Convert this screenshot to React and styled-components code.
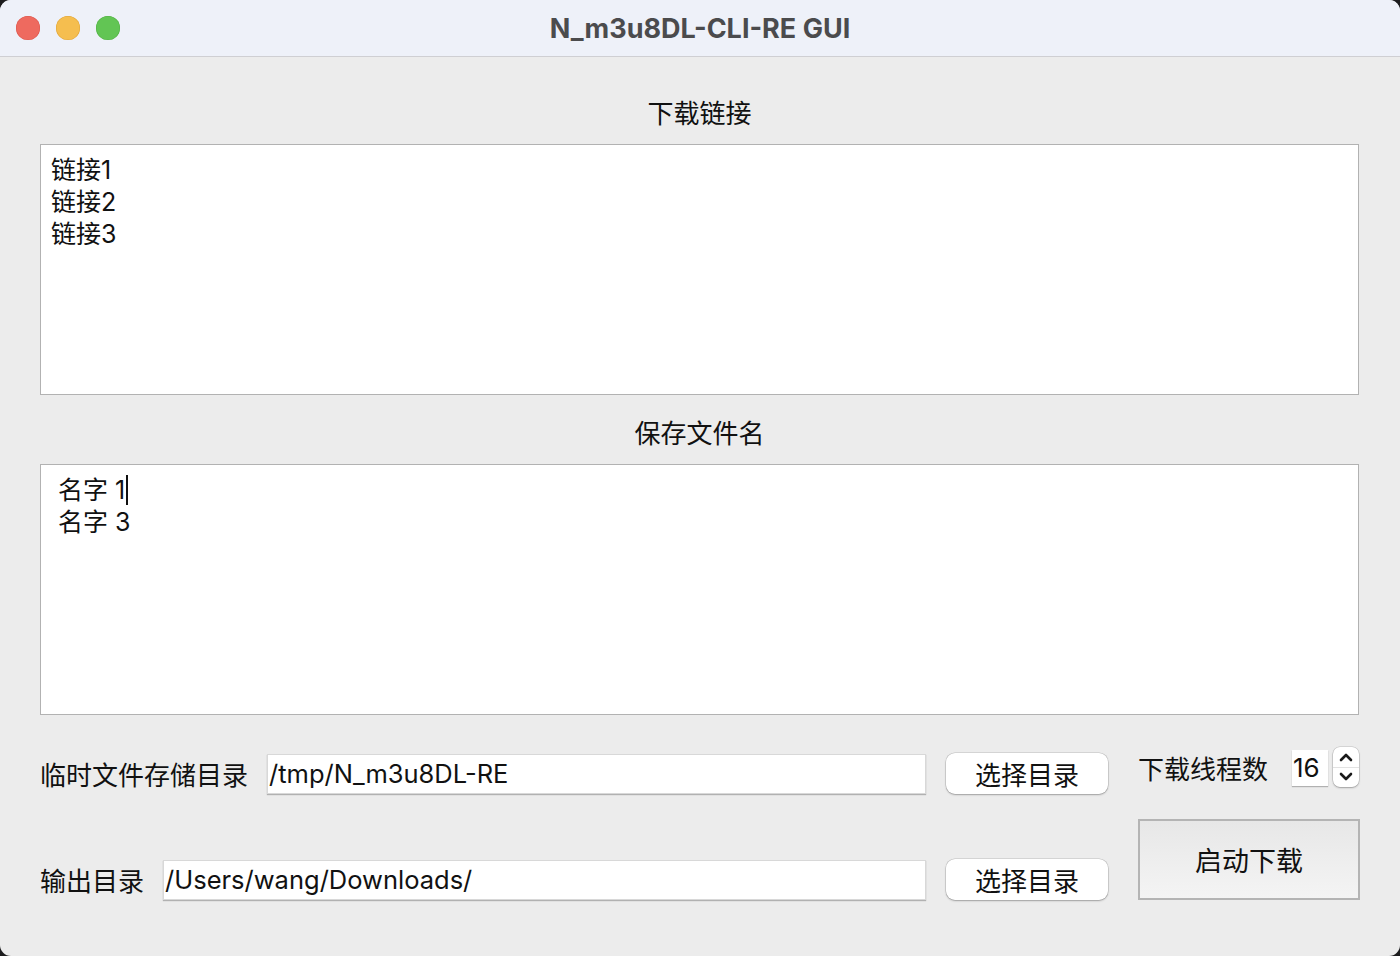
import React from "react";
import styled, { createGlobalStyle } from "styled-components";

const GlobalStyle = createGlobalStyle`
  html, body {
    margin: 0;
    padding: 0;
    background: #1c1c1e;
  }
  body {
    font-family: Inter, "Noto Sans CJK SC", "Noto Sans", sans-serif;
    color: #111;
  }
`;

function App() {
  return (
    <>
      <GlobalStyle />
      <Window>
        <TitleBar>
          <Lights>
            <Light color="#ee6a5f" edge="#d9544a" />
            <Light color="#f5be4f" edge="#dea235" />
            <Light color="#62c554" edge="#4fae41" />
          </Lights>
          <Title>N_m3u8DL-CLI-RE GUI</Title>
        </TitleBar>

        <Body>
          <SectionLabel>下载链接</SectionLabel>
          <TextBox indent={10}>
            <Line>链接1</Line>
            <Line>链接2</Line>
            <Line>链接3</Line>
          </TextBox>

          <SectionLabel top={21}>保存文件名</SectionLabel>
          <TextBox indent={17}>
            <Line>
              名字 1<Caret />
            </Line>
            <Line>名字 3</Line>
          </TextBox>

          <Bottom>
            <LeftRows>
              <Row top={38}>
                <RowLabel>临时文件存储目录</RowLabel>
                <PathInput>/tmp/N_m3u8DL-RE</PathInput>
                <PushButton>选择目录</PushButton>
              </Row>
              <Row top={65}>
                <RowLabel>输出目录</RowLabel>
                <PathInput>/Users/wang/Downloads/</PathInput>
                <PushButton>选择目录</PushButton>
              </Row>
            </LeftRows>

            <RightCol>
              <ThreadRow>
                <ThreadLabel>下载线程数</ThreadLabel>
                <SpinValue>16</SpinValue>
                <Stepper>
                  <StepHalf>
                    <svg width="16" height="10" viewBox="0 0 16 10">
                      <path d="M3 8 L8 3 L13 8" fill="none" stroke="#1a1a1a" strokeWidth="2.6" strokeLinecap="round" strokeLinejoin="round" />
                    </svg>
                  </StepHalf>
                  <StepHalf divider>
                    <svg width="16" height="10" viewBox="0 0 16 10">
                      <path d="M3 2 L8 7 L13 2" fill="none" stroke="#1a1a1a" strokeWidth="2.6" strokeLinecap="round" strokeLinejoin="round" />
                    </svg>
                  </StepHalf>
                </Stepper>
              </ThreadRow>
              <StartButton>启动下载</StartButton>
            </RightCol>
          </Bottom>
        </Body>
      </Window>
    </>
  );
}

export default App;

const Window = styled.div`
  width: 1400px;
  height: 956px;
  border-radius: 11px;
  overflow: hidden;
  background: #ececec;
  display: flex;
  flex-direction: column;
`;

const TitleBar = styled.div`
  height: 56px;
  flex-shrink: 0;
  background: #eef1f9;
  border-bottom: 1px solid #cfcfd3;
  display: flex;
  align-items: center;
  position: relative;
`;

const Lights = styled.div`
  display: flex;
  gap: 16px;
  padding-left: 16px;
`;

const Light = styled.span`
  width: 24px;
  height: 24px;
  border-radius: 50%;
  background: ${(p) => p.color};
  box-shadow: inset 0 0 0 0.5px ${(p) => p.edge};
`;

const Title = styled.div`
  position: absolute;
  left: 0;
  right: 0;
  text-align: center;
  font-family: Inter, "Liberation Sans", sans-serif;
  font-weight: 700;
  font-size: 27px;
  color: #4b4b4d;
  pointer-events: none;
`;

const Body = styled.div`
  flex: 1;
  display: flex;
  flex-direction: column;
  padding: 39px 41px 0 40px;
`;

const SectionLabel = styled.div`
  margin-top: ${(p) => p.top || 0}px;
  height: 32px;
  line-height: 32px;
  text-align: center;
  font-family: "Noto Sans CJK SC", sans-serif;
  font-size: 26px;
  color: #111;
  margin-bottom: 16px;
`;

const TextBox = styled.div`
  height: 251px;
  box-sizing: border-box;
  background: #fff;
  border: 1px solid #b2b2b2;
  padding: 9px ${(p) => p.indent}px;
`;

const Line = styled.div`
  height: 32px;
  line-height: 32px;
  font-size: 25px;
  font-family: Inter, "Noto Sans CJK SC", sans-serif;
  color: #111;
  display: flex;
  align-items: center;
  white-space: pre;
`;

const Caret = styled.span`
  display: inline-block;
  width: 2px;
  height: 30px;
  background: #111;
  margin-left: 1px;
`;

const Bottom = styled.div`
  display: flex;
`;

const LeftRows = styled.div`
  flex: 1;
  display: flex;
  flex-direction: column;
`;

const Row = styled.div`
  margin-top: ${(p) => p.top}px;
  height: 41px;
  display: flex;
  align-items: center;
`;

const RowLabel = styled.div`
  font-family: "Noto Sans CJK SC", sans-serif;
  font-size: 26px;
  color: #111;
  margin-right: 19px;
`;

const PathInput = styled.div`
  flex: 1;
  height: 40px;
  box-sizing: border-box;
  background: #fff;
  border: 1px solid #d8d8d8;
  box-shadow: 0 1px 1px rgba(0, 0, 0, 0.25);
  font-family: Inter, "Noto Sans CJK SC", sans-serif;
  font-size: 25.5px;
  line-height: 38px;
  padding-left: 1px;
  color: #111;
  white-space: nowrap;
`;

const PushButton = styled.div`
  margin-left: 20px;
  width: 162px;
  height: 41px;
  box-sizing: border-box;
  border-radius: 9px;
  background: #fff;
  box-shadow: 0 0 0 0.5px rgba(0, 0, 0, 0.18), 0 1px 2px rgba(0, 0, 0, 0.25);
  display: flex;
  align-items: center;
  justify-content: center;
  font-family: "Noto Sans CJK SC", sans-serif;
  font-size: 26px;
  color: #111;
`;

const RightCol = styled.div`
  width: 222px;
  margin-left: 30px;
  margin-right: -1px;
  display: flex;
  flex-direction: column;
`;

const ThreadRow = styled.div`
  margin-top: 32px;
  height: 40px;
  display: flex;
  align-items: center;
`;

const ThreadLabel = styled.div`
  font-family: "Noto Sans CJK SC", sans-serif;
  font-size: 26px;
  color: #111;
  margin-right: 24px;
`;

const SpinValue = styled.div`
  width: 36px;
  height: 36px;
  box-sizing: border-box;
  background: #fff;
  box-shadow: 0 1px 1px rgba(0, 0, 0, 0.25);
  font-family: Inter, sans-serif;
  font-size: 26px;
  line-height: 36px;
  padding-left: 1px;
  color: #111;
  margin-top: 2px;
`;

const Stepper = styled.div`
  margin-left: 5px;
  width: 26px;
  height: 40px;
  border-radius: 7px;
  background: #fff;
  box-shadow: 0 0 0 0.5px rgba(0, 0, 0, 0.18), 0 1px 2px rgba(0, 0, 0, 0.25);
  display: flex;
  flex-direction: column;
  overflow: hidden;
`;

const StepHalf = styled.div`
  flex: 1;
  display: flex;
  align-items: center;
  justify-content: center;
  border-top: ${(p) => (p.divider ? "1px solid #e2e2e2" : "none")};
`;

const StartButton = styled.div`
  margin-top: 32px;
  height: 81px;
  box-sizing: border-box;
  border: 2px solid #b4b4b4;
  background: linear-gradient(#e7e7e7, #f4f4f4);
  display: flex;
  align-items: center;
  justify-content: center;
  font-family: "Noto Sans CJK SC", sans-serif;
  font-size: 27px;
  color: #111;
`;
